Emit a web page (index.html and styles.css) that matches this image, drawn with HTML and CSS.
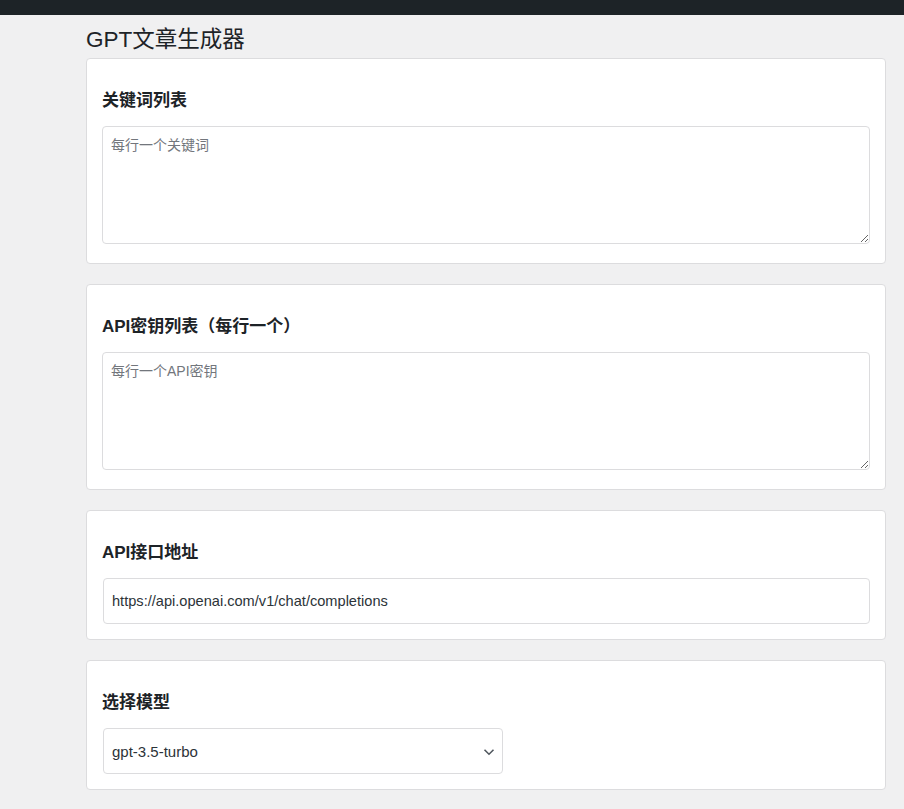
FILE: index.html
```html
<!DOCTYPE html>
<html lang="zh-CN">
<head>
<meta charset="utf-8">
<title>GPT文章生成器</title>
<link rel="stylesheet" href="styles.css">
</head>
<body>
<div class="adminbar"></div>
<div class="wrap">
  <h1 class="page-title">GPT文章生成器</h1>
  <div class="card">
    <h2 class="card-title">关键词列表</h2>
    <textarea class="area" placeholder="每行一个关键词"></textarea>
  </div>
  <div class="card">
    <h2 class="card-title">API密钥列表（每行一个）</h2>
    <textarea class="area" placeholder="每行一个API密钥"></textarea>
  </div>
  <div class="card card-short">
    <h2 class="card-title">API接口地址</h2>
    <input class="field" type="text" value="https://api.openai.com/v1/chat/completions">
  </div>
  <div class="card card-short card-last">
    <h2 class="card-title">选择模型</h2>
    <div class="select-wrap">
      <select class="select">
        <option>gpt-3.5-turbo</option>
        <option>gpt-4</option>
      </select>
      <svg class="chevron" width="12" height="8" viewBox="0 0 12 8"><path d="M1.5 1.8 L6 6.2 L10.5 1.8" fill="none" stroke="#50575e" stroke-width="1.6"/></svg>
    </div>
  </div>
</div>
</body>
</html>
```
FILE: styles.css
```css
html, body {
  margin: 0;
  padding: 0;
}
body {
  background: #f0f0f1;
  font-family: "Liberation Sans", "Noto Sans CJK SC", sans-serif;
  color: #1d2327;
  font-size: 14px;
}
.adminbar {
  height: 15px;
  background: #1d2327;
}
.wrap {
  margin-left: 86px;
  width: 800px;
  padding-top: 10px;
}
.page-title {
  margin: 0 0 4px;
  font-size: 22.5px;
  font-weight: 400;
  line-height: 29px;
  color: #1d2327;
}
.card {
  background: #fff;
  border: 1px solid #dcdcde;
  border-radius: 4px;
  padding: 30px 15px 19px;
  margin-bottom: 20px;
}
.card-short {
  padding-bottom: 15px;
}
.card-title {
  margin: 0 0 13px;
  font-size: 17px;
  font-weight: 700;
  line-height: 24px;
  color: #1d2327;
}
.area {
  display: block;
  box-sizing: border-box;
  width: 768px;
  height: 118px;
  margin: 0;
  padding: 8px 8px;
  border: 1px solid #dcdcde;
  border-radius: 4px;
  font-family: "Liberation Sans", "Noto Sans CJK SC", sans-serif;
  font-size: 14px;
  line-height: 20px;
  color: #2c3338;
  background: #fff;
}
.area::placeholder {
  color: #72767c;
}
.field {
  display: block;
  box-sizing: border-box;
  width: 767px;
  height: 46px;
  margin: 0 1px;
  padding: 0 8px;
  border: 1px solid #dcdcde;
  border-radius: 4px;
  font-family: "Liberation Sans", "Noto Sans CJK SC", sans-serif;
  font-size: 14.6px;
  color: #2c3338;
  background: #fff;
}
.select-wrap {
  position: relative;
  width: 400px;
  margin: 0 1px;
}
.select {
  display: block;
  box-sizing: border-box;
  width: 400px;
  height: 46px;
  margin: 0;
  padding: 0 30px 0 8px;
  border: 1px solid #dcdcde;
  border-radius: 4px;
  font-family: "Liberation Sans", "Noto Sans CJK SC", sans-serif;
  font-size: 15px;
  color: #2c3338;
  background: #fff;
  appearance: none;
  -webkit-appearance: none;
}
.chevron {
  position: absolute;
  right: 8px;
  top: 20px;
  pointer-events: none;
}
```
